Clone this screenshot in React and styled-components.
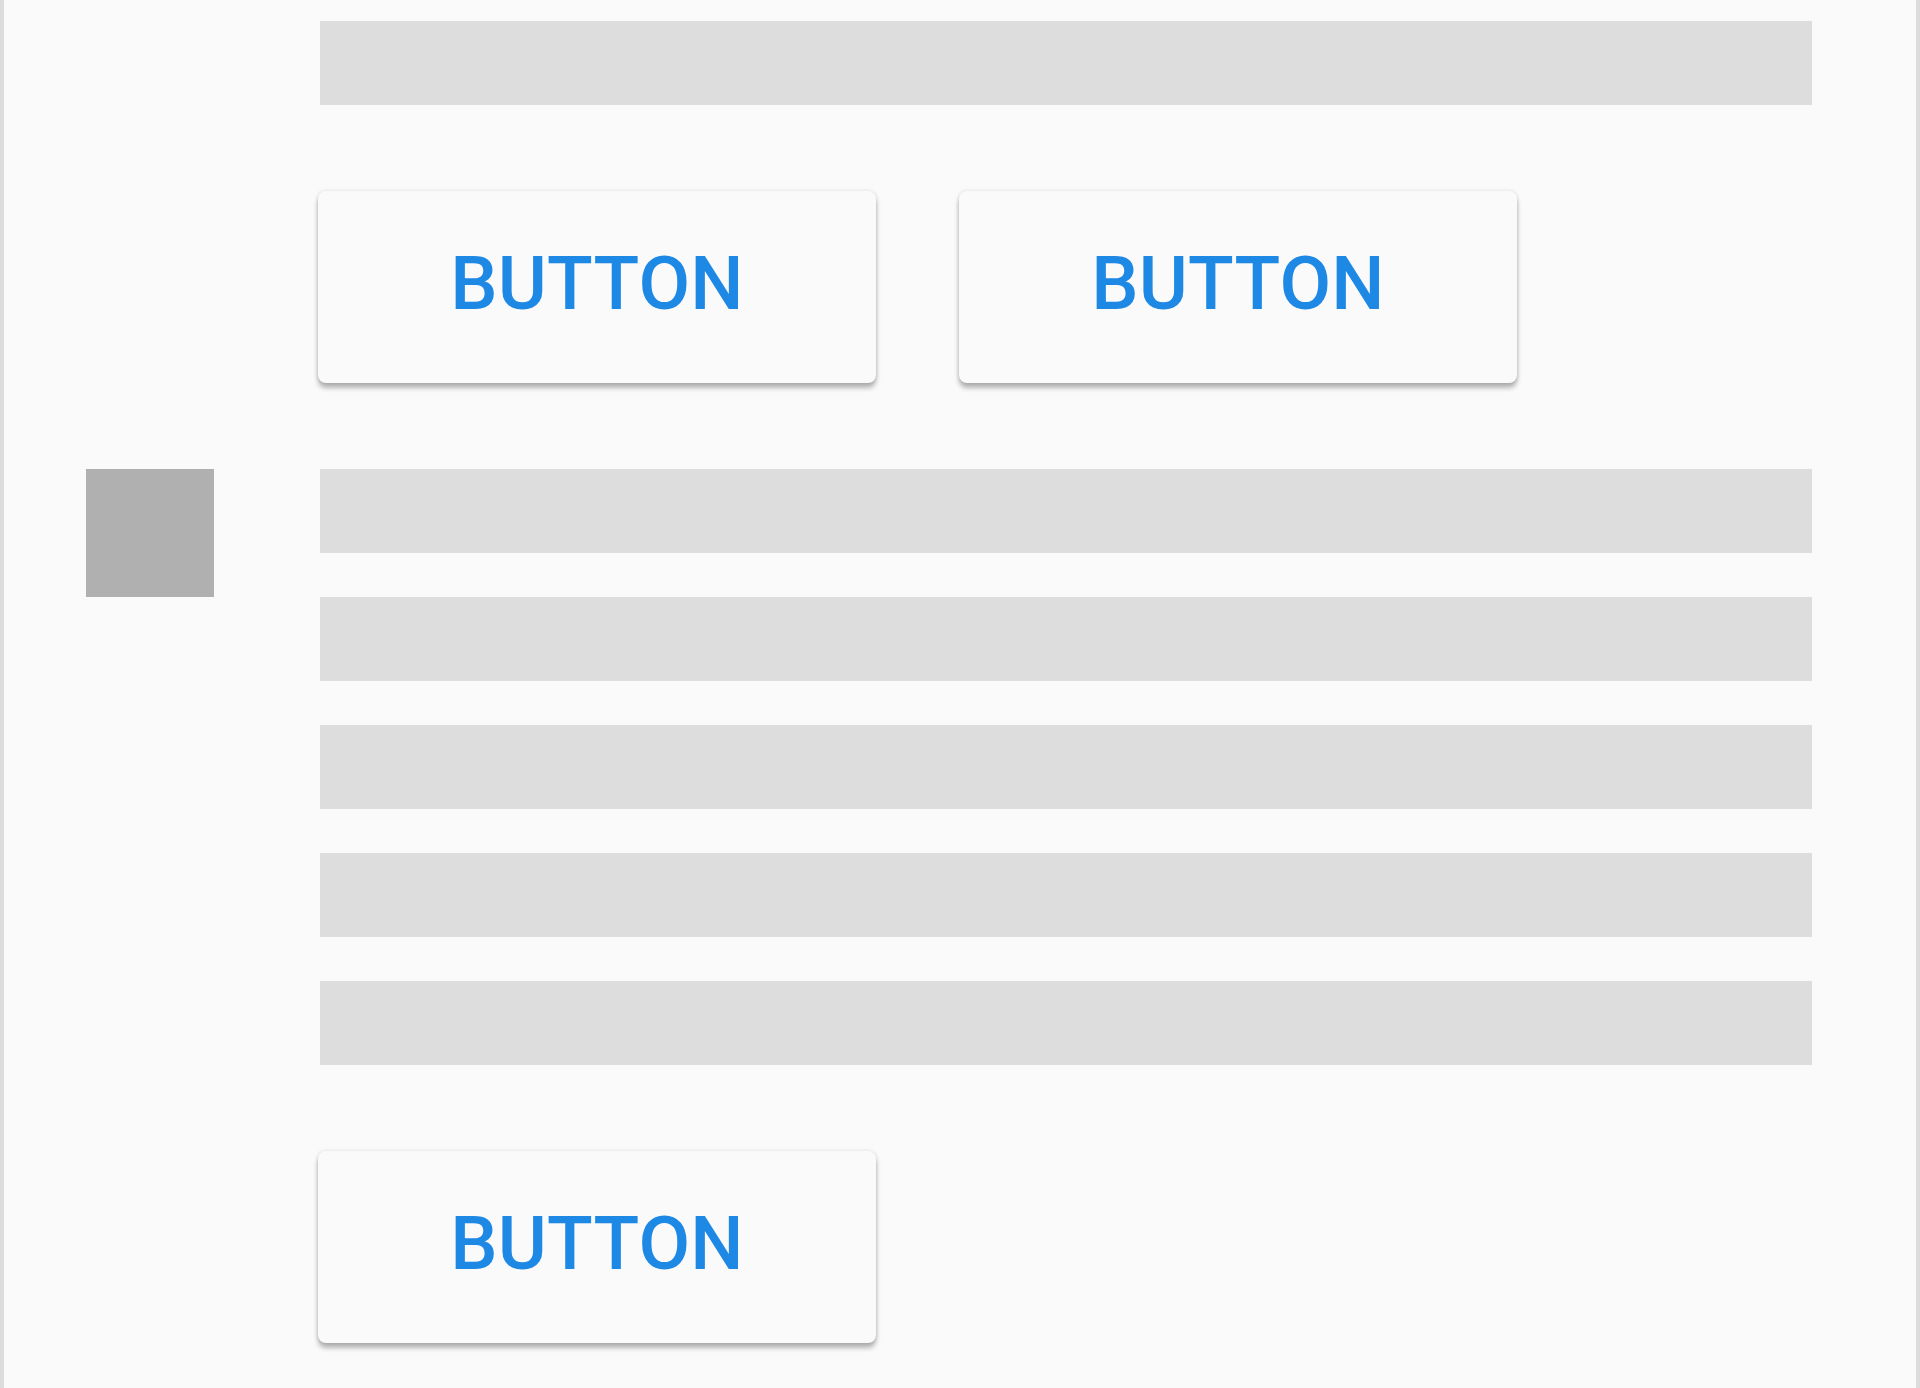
import styled, { createGlobalStyle } from "styled-components";

const GlobalStyle = createGlobalStyle`
  html, body {
    margin: 0;
    padding: 0;
    background: #fafafa;
  }
  body {
    font-family: Roboto, "Liberation Sans", sans-serif;
  }
`;

const Page = styled.div`
  box-sizing: border-box;
  width: 1920px;
  height: 1388px;
  overflow: hidden;
  background: #fafafa;
  border-left: 4px solid #dcdcdc;
  border-right: 4px solid #dcdcdc;
  padding: 21px 104px 0 82px;
  display: flex;
  flex-direction: column;
  gap: 86px;
`;

const Section = styled.div`
  display: grid;
  grid-template-columns: 128px 1fr;
  column-gap: 106px;
  align-items: start;
`;

const Square = styled.div`
  width: 128px;
  height: 128px;
  background: #b0b0b0;
`;

const BarList = styled.div`
  grid-column: 2;
  display: flex;
  flex-direction: column;
  gap: 44px;
`;

const Bar = styled.div`
  height: 84px;
  background: #dddddd;
`;

const ButtonRow = styled.div`
  grid-column: 2;
  display: flex;
  gap: 83px;
  margin-left: -2px;
`;

const Button = styled.button`
  box-sizing: border-box;
  width: 558px;
  height: 192px;
  border: none;
  border-radius: 8px;
  background: #fafafa;
  color: #1e88e5;
  font-family: Roboto, "Liberation Sans", sans-serif;
  font-weight: 500;
  font-size: 75px;
  letter-spacing: 0.2px;
  padding: 0 0 9px;
  cursor: pointer;
  box-shadow: 0 5px 5px rgba(0, 0, 0, 0.28), 0 0 4px rgba(0, 0, 0, 0.12);
`;

const App = () => {
  return (
    <>
      <GlobalStyle />
      <Page>
        <Section>
          <BarList>
            <Bar />
          </BarList>
        </Section>
        <Section>
          <ButtonRow>
            <Button>BUTTON</Button>
            <Button>BUTTON</Button>
          </ButtonRow>
        </Section>
        <Section>
          <Square />
          <BarList>
            {[0, 1, 2, 3, 4].map((i) => (
              <Bar key={i} />
            ))}
          </BarList>
        </Section>
        <Section>
          <ButtonRow>
            <Button>BUTTON</Button>
          </ButtonRow>
        </Section>
      </Page>
    </>
  );
};

export default App;
